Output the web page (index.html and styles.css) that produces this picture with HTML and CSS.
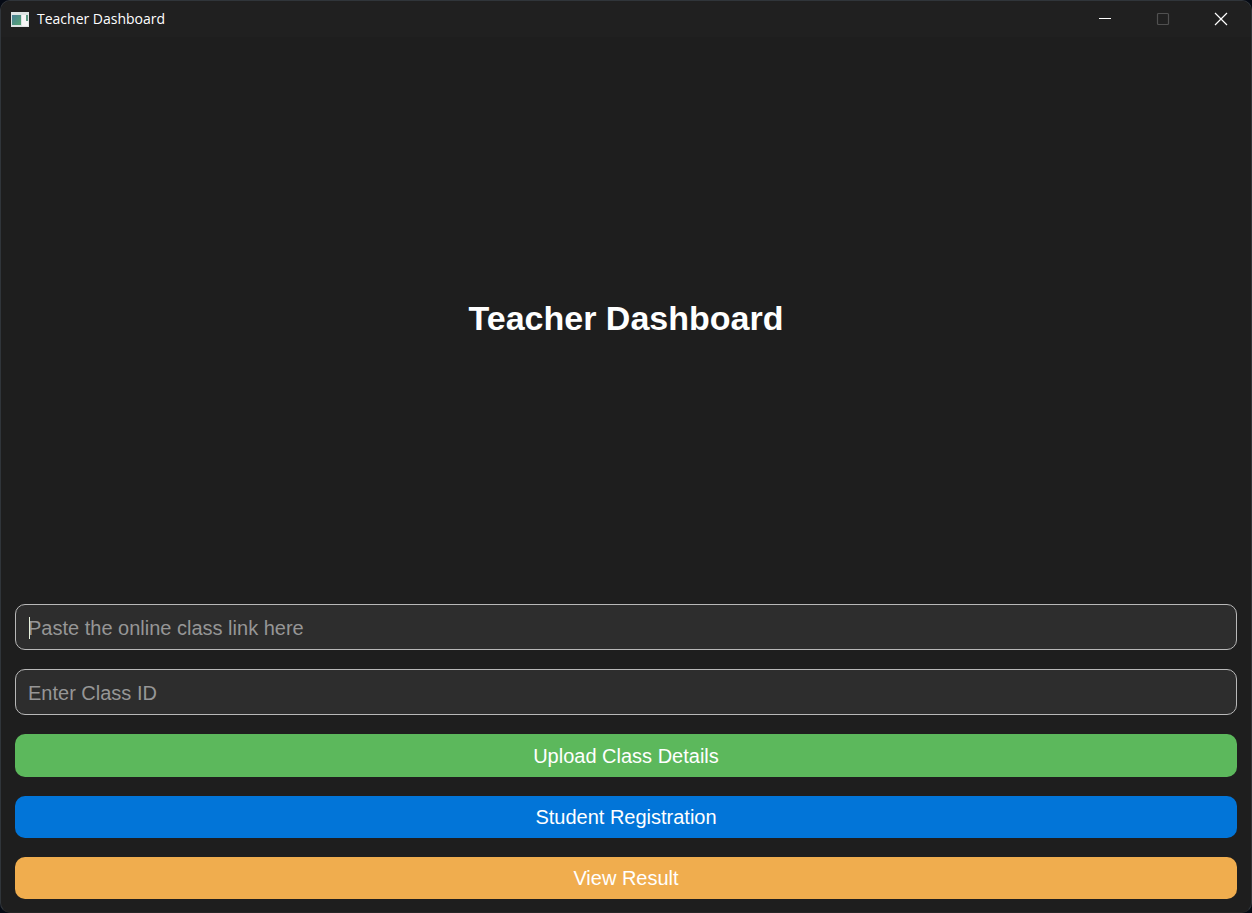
FILE: index.html
```html
<!DOCTYPE html>
<html lang="en">
<head>
<meta charset="utf-8">
<title>Teacher Dashboard</title>
<link rel="stylesheet" href="styles.css">
</head>
<body>
<div class="window">
  <header class="titlebar">
    <svg class="app-icon" width="18" height="15" viewBox="0 0 18 15" aria-hidden="true">
      <defs>
        <linearGradient id="pane" x1="0" y1="0" x2="1" y2="1">
          <stop offset="0" stop-color="#4a7f96"/>
          <stop offset="1" stop-color="#56a673"/>
        </linearGradient>
      </defs>
      <rect width="18" height="15" fill="#dfe5e5"/>
      <rect x="1" y="3" width="9" height="10" fill="url(#pane)"/>
      <rect x="11" y="3" width="6" height="11" fill="#f7f7f7"/>
      <rect x="15" y="3" width="2" height="6" fill="#5d9a83"/>
    </svg>
    <span class="caption">Teacher Dashboard</span>
    <div class="controls">
      <button class="control" type="button" aria-label="Minimize"><svg width="14" height="14" viewBox="0 0 14 14"><path d="M1 6.5h12"/></svg></button>
      <button class="control" type="button" aria-label="Maximize" disabled><svg width="14" height="14" viewBox="0 0 14 14"><rect x="1.5" y="1.5" width="11" height="11" rx="1"/></svg></button>
      <button class="control" type="button" aria-label="Close"><svg width="14" height="14" viewBox="0 0 14 14"><path d="M1 1l12 12M13 1L1 13"/></svg></button>
    </div>
  </header>
  <main class="content">
    <h1 class="heading">Teacher Dashboard</h1>
    <div class="field">
      <input class="input" type="text" aria-label="Online class link" placeholder="Paste the online class link here">
      <span class="caret"></span>
    </div>
    <div class="field">
      <input class="input" type="text" aria-label="Class ID" placeholder="Enter Class ID">
    </div>
    <button class="action upload" type="button">Upload Class Details</button>
    <button class="action register" type="button">Student Registration</button>
    <button class="action result" type="button">View Result</button>
  </main>
</div>
</body>
</html>
```
FILE: styles.css
```css
* { box-sizing: border-box; }

body {
  margin: 0;
  background: #050a14;
  font-family: "Liberation Sans", Arial, sans-serif;
}

.window {
  display: flex;
  flex-direction: column;
  min-height: 100vh;
  border: 1px solid #30353a;
  border-bottom-color: #262626;
  border-radius: 10px;
  background: #1e1e1e;
  color: #fff;
  overflow: hidden;
}

.titlebar {
  display: flex;
  align-items: center;
  height: 36px;
  padding: 0 1px 0 10px;
  background: #202020;
}

.caption {
  flex: 1;
  margin-left: 8px;
  font-family: "Open Sans", "Noto Sans", sans-serif;
  font-size: 14px;
  line-height: 20px;
}

.controls { display: flex; }

.control {
  display: flex;
  align-items: center;
  justify-content: center;
  width: 58px;
  height: 36px;
  padding: 0;
  border: 0;
  background: none;
  color: #fff;
}

.control:disabled { color: #505050; }

.control svg {
  fill: none;
  stroke: currentColor;
  stroke-width: 1.2;
}

.content {
  flex: 1;
  display: flex;
  flex-direction: column;
  gap: 19px;
  padding: 14px 14px 13px;
}

.heading {
  flex: 1;
  display: flex;
  align-items: center;
  justify-content: center;
  margin: 0;
  font-size: 34px;
  line-height: 42px;
}

.field {
  position: relative;
  display: flex;
}

.input {
  flex: 1;
  min-width: 0;
  height: 46px;
  padding: 2px 12px 0;
  border: 1px solid #b8b8b8;
  border-radius: 10px;
  background: #2d2d2d;
  color: #fff;
  font: 20px/24px "Liberation Sans", Arial, sans-serif;
  outline: 0;
}

.input::placeholder { color: #969696; opacity: 1; }

.caret {
  position: absolute;
  left: 14px;
  top: 13px;
  width: 1px;
  height: 22px;
  background: #e6f0dc;
}

.action {
  height: 42px;
  padding: 0;
  border: 0;
  border-radius: 10px;
  color: #fff;
  font: 20px/24px "Liberation Sans", Arial, sans-serif;
}

.upload {
  height: 43px;
  background: #5cb85c;
}

.register { background: #0275d8; }
.result { background: #f0ad4e; }
```
